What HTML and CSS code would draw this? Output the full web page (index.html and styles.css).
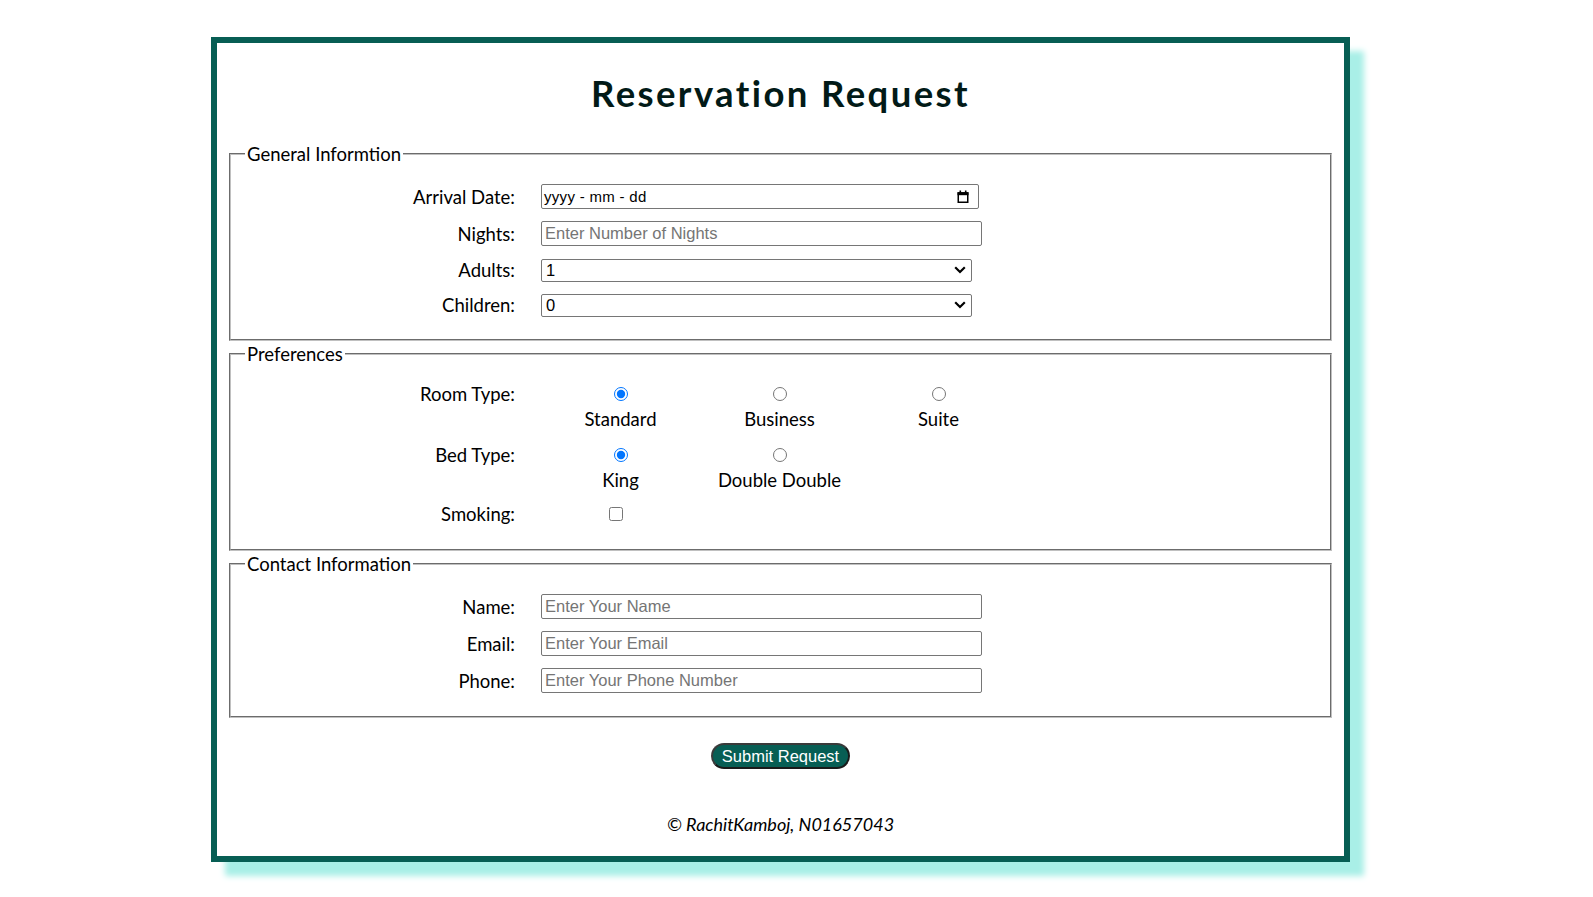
FILE: index.html
```html
<!DOCTYPE html>
<html lang="en">
<head>
<meta charset="utf-8">
<title>Reservation Request</title>
<link rel="stylesheet" href="styles.css">
</head>
<body>
<div class="card">
  <h1 class="title">Reservation Request</h1>
  <form class="form">
    <fieldset class="group">
      <legend class="legend">General Informtion</legend>
      <div class="fields fields-general">
        <div class="row">
          <label class="lbl">Arrival Date:</label>
          <div class="date-input">
            <span class="date-text">yyyy - mm - dd</span>
            <svg class="cal-icon" width="12" height="13" viewBox="0 0 12 13">
              <rect x="1.25" y="3" width="9.5" height="9.25" fill="none" stroke="#000" stroke-width="1.5"/>
              <rect x="0.5" y="2.2" width="11" height="3" fill="#000"/>
              <rect x="2.5" y="0.5" width="1.6" height="2.5" fill="#000"/>
              <rect x="7.9" y="0.5" width="1.6" height="2.5" fill="#000"/>
            </svg>
          </div>
        </div>
        <div class="row">
          <label class="lbl">Nights:</label>
          <input class="text-input" type="text" placeholder="Enter Number of Nights">
        </div>
        <div class="row">
          <label class="lbl">Adults:</label>
          <div class="select-wrap">
            <select class="select"><option>1</option><option>2</option><option>3</option></select>
            <svg class="chevron" width="12" height="8" viewBox="0 0 12 8"><polyline points="1.2,1.3 6,6 10.8,1.3" fill="none" stroke="#000" stroke-width="2.2"/></svg>
          </div>
        </div>
        <div class="row">
          <label class="lbl">Children:</label>
          <div class="select-wrap">
            <select class="select"><option>0</option><option>1</option><option>2</option></select>
            <svg class="chevron" width="12" height="8" viewBox="0 0 12 8"><polyline points="1.2,1.3 6,6 10.8,1.3" fill="none" stroke="#000" stroke-width="2.2"/></svg>
          </div>
        </div>
      </div>
    </fieldset>

    <fieldset class="group">
      <legend class="legend">Preferences</legend>
      <div class="prefs">
        <div class="opt-row">
          <label class="opt-lbl">Room Type:</label>
          <div class="opt"><span class="opt-radio"><input type="radio" name="room" checked></span><span class="opt-text">Standard</span></div>
          <div class="opt"><span class="opt-radio"><input type="radio" name="room"></span><span class="opt-text">Business</span></div>
          <div class="opt"><span class="opt-radio"><input type="radio" name="room"></span><span class="opt-text">Suite</span></div>
        </div>
        <div class="opt-row opt-row-bed">
          <label class="opt-lbl">Bed Type:</label>
          <div class="opt"><span class="opt-radio"><input type="radio" name="bed" checked></span><span class="opt-text">King</span></div>
          <div class="opt"><span class="opt-radio"><input type="radio" name="bed"></span><span class="opt-text">Double Double</span></div>
        </div>
        <div class="opt-row opt-row-smoke">
          <label class="opt-lbl">Smoking:</label>
          <div class="opt"><span class="opt-radio"><input class="check" type="checkbox"></span></div>
        </div>
      </div>
    </fieldset>

    <fieldset class="group">
      <legend class="legend">Contact Information</legend>
      <div class="fields fields-contact">
        <div class="row">
          <label class="lbl">Name:</label>
          <input class="text-input" type="text" placeholder="Enter Your Name">
        </div>
        <div class="row">
          <label class="lbl">Email:</label>
          <input class="text-input" type="text" placeholder="Enter Your Email">
        </div>
        <div class="row">
          <label class="lbl">Phone:</label>
          <input class="text-input" type="text" placeholder="Enter Your Phone Number">
        </div>
      </div>
    </fieldset>

    <div class="actions">
      <button class="submit" type="button">Submit Request</button>
    </div>
  </form>
  <p class="footer">© RachitKamboj, N01657043</p>
</div>
</body>
</html>
```
FILE: styles.css
```css
html, body {
  margin: 0;
  padding: 0;
  background: #ffffff;
}

body {
  font-family: Lato, "Open Sans", sans-serif;
  color: #000;
  padding-bottom: 30px;
}

.card {
  box-sizing: border-box;
  width: 1139px;
  margin: 37px 0 0 211px;
  border: 6px solid #075e54;
  box-shadow: 14px 14px 6px #a9efe7;
  padding: 0 0 21px;
  background: #fff;
}

.title {
  margin: 28px 0;
  font-size: 36.5px;
  font-weight: 700;
  letter-spacing: 2.4px;
  line-height: 44px;
  text-align: center;
  color: #021a17;
}

.form {
  margin: 0 12px;
}

.group {
  margin: 0;
  padding: 7px 14px 12px;
  border: 2px groove #c0c0c0;
  font-size: 18.5px;
}

.group + .group {
  margin-top: 2px;
}

.legend {
  padding: 0 2px;
  line-height: 22px;
}

.fields {
  display: flex;
  flex-direction: column;
  gap: 12px;
  padding: 12px 0 11px;
}

.row {
  display: grid;
  grid-template-columns: 270px auto;
  justify-content: start;
  column-gap: 26px;
  align-items: center;
}

.lbl {
  text-align: right;
  line-height: 22px;
}

.text-input {
  box-sizing: border-box;
  width: 441px;
  height: 25px;
  margin: 0;
  padding: 0 3px;
  border: 1px solid #767676;
  border-radius: 2px;
  font: 16.5px "Liberation Sans", Arial, sans-serif;
  color: #000;
  background: #fff;
}

.text-input::placeholder {
  color: #757575;
}

.date-input {
  box-sizing: border-box;
  width: 438px;
  height: 25px;
  display: flex;
  align-items: center;
  justify-content: space-between;
  padding: 0 9px 0 2px;
  border: 1px solid #767676;
  border-radius: 2px;
  font: 15px "Liberation Sans", Arial, sans-serif;
}

.date-text {
  color: #000;
  letter-spacing: 0.3px;
}

.cal-icon {
  display: block;
  margin-top: -1px;
}

.select-wrap {
  position: relative;
  width: 431px;
  height: 23px;
}

.select {
  appearance: none;
  -webkit-appearance: none;
  box-sizing: border-box;
  width: 431px;
  height: 23px;
  margin: 0;
  padding: 0 4px;
  border: 1px solid #767676;
  border-radius: 2px;
  background: #fff;
  font: 16.5px "Liberation Sans", Arial, sans-serif;
  color: #000;
}

.chevron {
  position: absolute;
  right: 6px;
  top: 8px;
  pointer-events: none;
}

.prefs {
  display: flex;
  flex-direction: column;
  padding: 9px 0 10px;
}

.opt-row {
  display: grid;
  grid-template-columns: 296px repeat(3, 159px);
  align-items: start;
}

.opt-row-bed {
  margin-top: 11px;
}

.opt-row-smoke {
  margin-top: 9px;
}

.opt-lbl {
  box-sizing: border-box;
  padding-right: 26px;
  text-align: right;
  line-height: 26px;
}

.opt {
  display: flex;
  flex-direction: column;
  align-items: center;
}

.opt-radio {
  height: 26px;
  display: flex;
  align-items: center;
}

.opt-radio input {
  margin: 0;
  width: 14px;
  height: 14px;
}

.opt-radio .check {
  margin-right: 9px;
}

.opt-text {
  line-height: 24px;
}

.actions {
  margin-top: 25px;
  text-align: center;
}

.submit {
  box-sizing: border-box;
  height: 26px;
  padding: 0 9px;
  border: 2px solid #3a3a3a;
  border-bottom-color: #1a1a1a;
  border-right-color: #1a1a1a;
  border-radius: 13px;
  background: #075e54;
  color: #fff;
  font: 16.5px "Liberation Sans", Arial, sans-serif;
  line-height: 20px;
}

.footer {
  margin: 44px 0 0;
  font-size: 18px;
  font-style: italic;
  line-height: 22px;
  text-align: center;
}
```
